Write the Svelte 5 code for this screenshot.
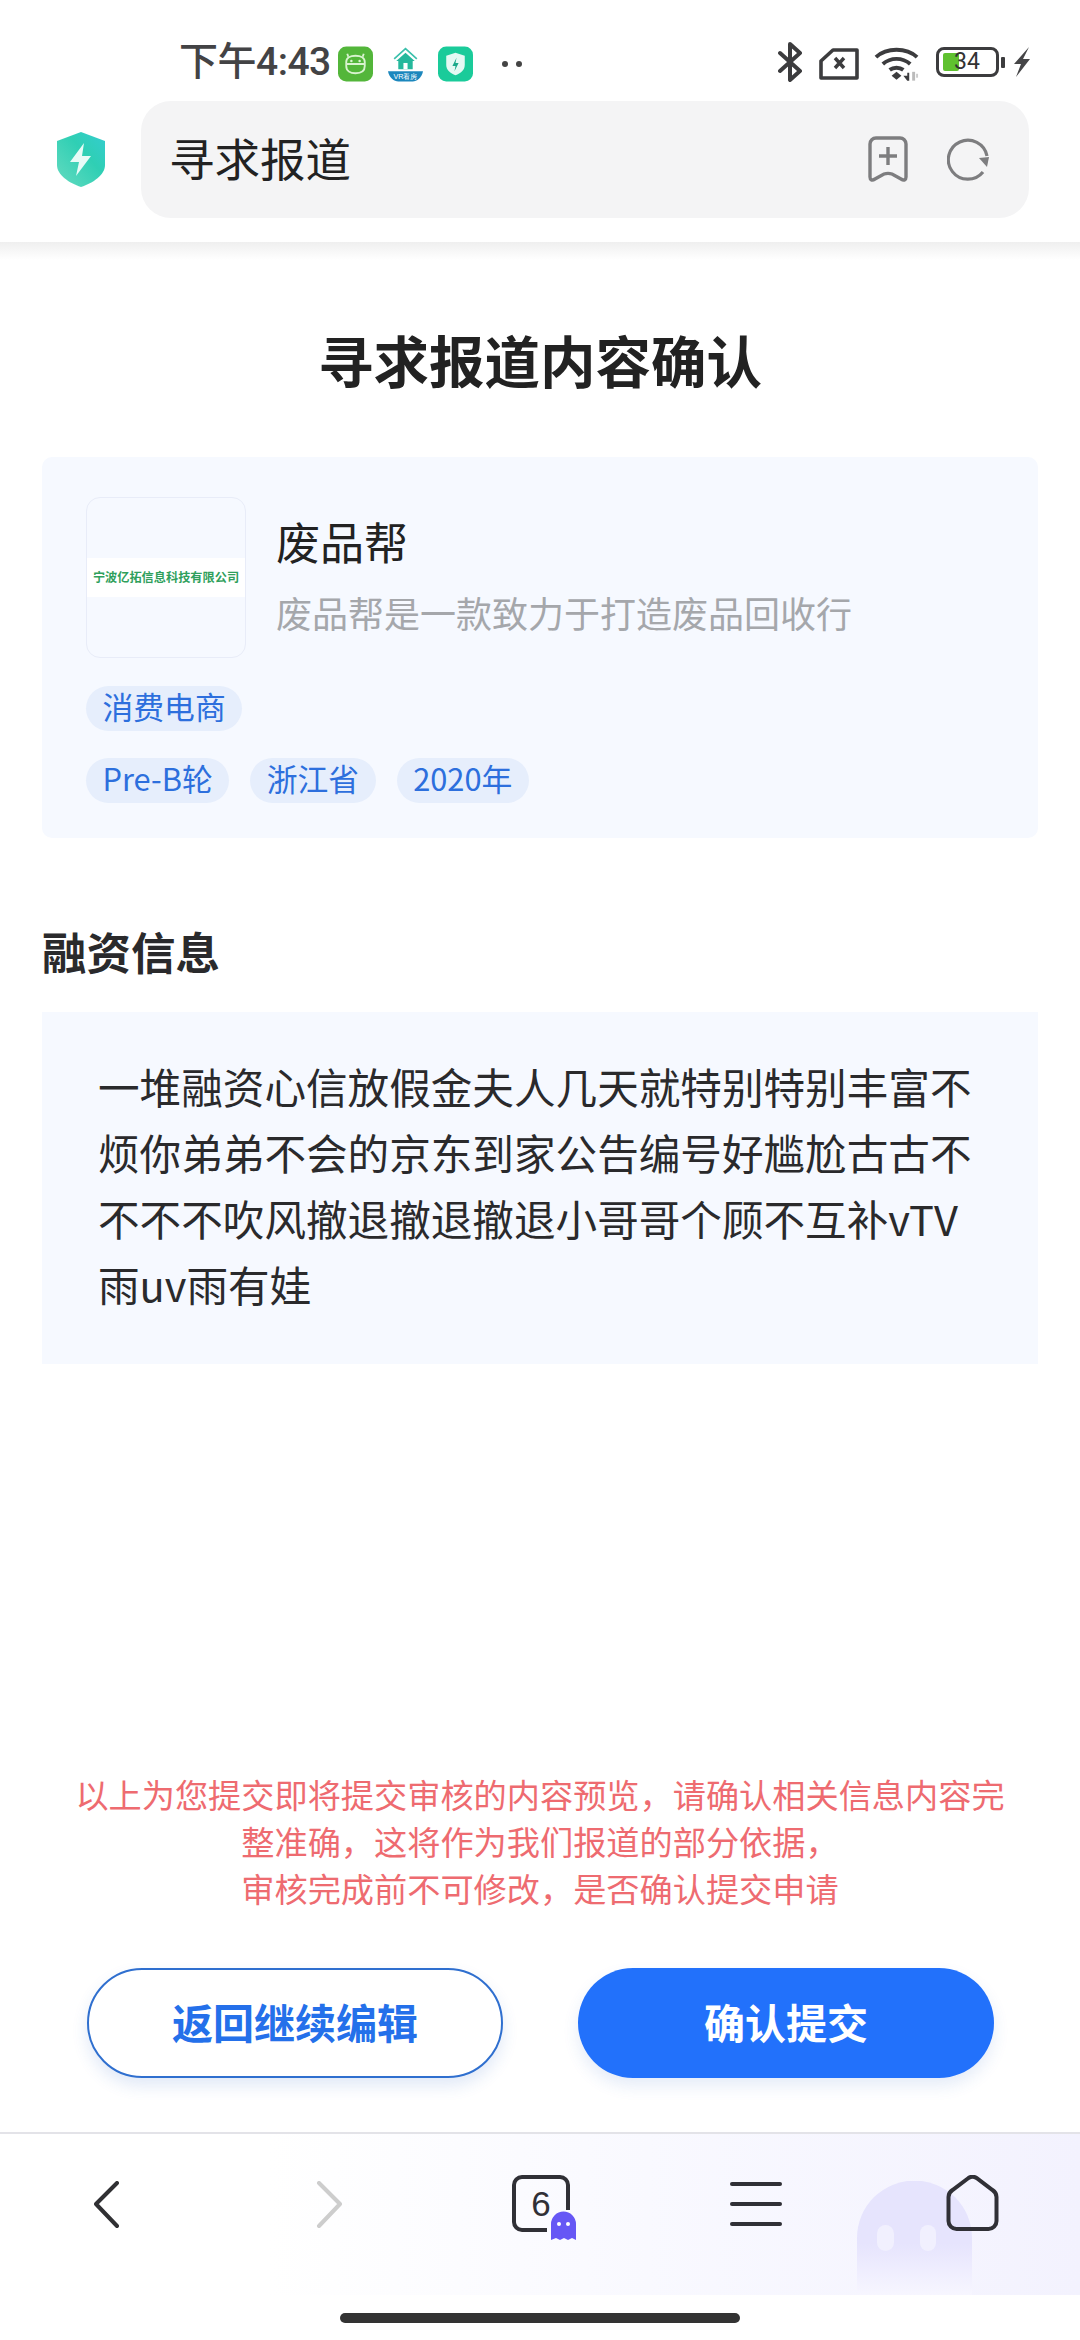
<script>
  const tags1 = ['消费电商'];
  const tags2 = ['Pre-B轮', '浙江省', '2020年'];
</script>

<div class="app">
  <header class="top">
    <div class="status">
      <div class="status-left">
        <span class="time">下午4:43</span>
        <svg class="si" width="35" height="36" viewBox="0 0 34 34">
          <rect width="34" height="34" rx="8" fill="#53b63a"/>
          <path d="M8 15c0-4 4-6 9-6s9 2 9 6v4c0 5-4 7-9 7s-9-2-9-7z" fill="none" stroke="#d9f3d0" stroke-width="1.8"/>
          <path d="M8 17h18M10 10l-1-3M24 10l1-3" stroke="#d9f3d0" stroke-width="1.8" fill="none"/>
          <circle cx="13" cy="14" r="1.2" fill="#d9f3d0"/><circle cx="21" cy="14" r="1.2" fill="#d9f3d0"/>
        </svg>
        <svg class="si house" width="35" height="36" viewBox="0 0 34 34">
          <path d="M6 12L17 2l11 10" fill="none" stroke="#3cc0ac" stroke-width="1.6"/>
          <path d="M17 6 L8 14 H10 V22 H24 V14 H26Z" fill="#25b89c"/>
          <rect x="15" y="16" width="4" height="6" fill="#fff"/>
          <path d="M0 24 H34 C33 30 28 34 24 34 H10 C6 34 1 30 0 24Z" fill="#1c87bd"/>
          <text x="17" y="32" font-size="7" text-anchor="middle" fill="#fff" font-family="Liberation Sans">VR看房</text>
        </svg>
        <svg class="si" width="35" height="36" viewBox="0 0 34 34">
          <rect width="34" height="34" rx="8" fill="#1acb9a"/>
          <path d="M17 6l9 3v9c0 5-4 8-9 10-5-2-9-5-9-10V9z" fill="#e4f9f3"/>
          <path d="M18 11l-4 8h3l-1 5 4-8h-3z" fill="#1aa98a"/>
        </svg>
        <span class="dots"><i></i><i></i></span>
      </div>
      <div class="status-right">
        <svg width="25" height="40" viewBox="0 0 25 40"><path d="M2 11l20 18-10 9V2l10 9L2 29" fill="none" stroke="#3c3c3e" stroke-width="4" stroke-linejoin="round" stroke-linecap="round"/></svg>
        <svg class="sim" width="40" height="32" viewBox="0 0 40 32"><path d="M14 2h24v28H2V13z" fill="none" stroke="#3c3c3e" stroke-width="3.6" stroke-linejoin="round"/><path d="M16 10l9 10M25 10l-9 10" stroke="#3c3c3e" stroke-width="3.4"/></svg>
        <svg class="wifi" width="46" height="36" viewBox="0 0 47 36">
          <path d="M2 11C13 1 33 1 44 11" fill="none" stroke="#3c3c3e" stroke-width="4"/>
          <path d="M9 18C17 11 29 11 37 18" fill="none" stroke="#3c3c3e" stroke-width="4"/>
          <path d="M16 24C20 21 26 21 30 24" fill="none" stroke="#3c3c3e" stroke-width="4"/>
          <path d="M23 26l5 4-5 4-5-4z" fill="#3c3c3e"/>
          <path d="M30 30h4v-3h2v8h-2z" fill="#3c3c3e"/><rect x="39" y="26" width="3" height="9" fill="#bbb"/><rect x="43" y="28" width="2" height="4" fill="#ccc"/>
        </svg>
        <span class="battery"><span class="fill"></span><span class="num">34</span></span>
        <span class="nub"></span>
        <svg class="bolt" width="19" height="30" viewBox="0 0 19 30"><path d="M17 0L2 17h7L4 30 18 12h-7z" fill="#454547"/></svg>
      </div>
    </div>
    <div class="addr-row">
      <svg class="shield" width="48" height="55" viewBox="0 0 48 55">
        <defs><linearGradient id="sg" x1="0" y1="1" x2="1" y2="0"><stop offset="0" stop-color="#66dbc0"/><stop offset="0.6" stop-color="#2fcfb4"/><stop offset="1" stop-color="#34cdd0"/></linearGradient></defs>
        <path d="M24 0l24 9v24c0 10-12 18-24 22C12 51 0 43 0 33V9z" fill="url(#sg)"/>
        <path d="M27 11L13 30h9l-3 14 15-20h-9z" fill="#e8fbf7"/>
      </svg>
      <div class="addr">
        <span class="url">寻求报道</span>
        <svg class="bm" width="40" height="46" viewBox="0 0 40 46"><path d="M8 2h24a6 6 0 0 1 6 6v33c0 3-2 4-5 2l-9-5c-3-1-5-1-8 0l-9 5c-3 2-5 1-5-2V8a6 6 0 0 1 6-6z" fill="none" stroke="#7d7d7f" stroke-width="3.4"/><path d="M20 11v18M11 20h18" stroke="#7d7d7f" stroke-width="3.4"/></svg>
        <svg class="rl" width="43" height="43" viewBox="0 0 43 43"><path d="M36 34A19.5 19.5 0 1 1 40 18" fill="none" stroke="#7d7d7f" stroke-width="3.2"/><path d="M32 20l10-1-2 10z" fill="#7d7d7f"/></svg>
      </div>
    </div>
  </header>
  <div class="top-fade"></div>

  <main>
    <h1>寻求报道内容确认</h1>
    <section class="card">
      <div class="co">
        <div class="logo"><div class="band">宁波亿拓信息科技有限公司</div></div>
        <div class="co-text">
          <div class="name">废品帮</div>
          <div class="desc">废品帮是一款致力于打造废品回收行</div>
        </div>
      </div>
      <div class="tags">{#each tags1 as t}<span class="tag">{t}</span>{/each}</div>
      <div class="tags t2">{#each tags2 as t}<span class="tag">{t}</span>{/each}</div>
    </section>
    <h2>融资信息</h2>
    <section class="body">一堆融资心信放假金夫人几天就特别特别丰富不烦你弟弟不会的京东到家公告编号好尴尬古古不不不不吹风撤退撤退撤退小哥哥个顾不互补vTV雨uv雨有娃</section>
  </main>

  <p class="notice">以上为您提交即将提交审核的内容预览，请确认相关信息内容完<br/>整准确，这将作为我们报道的部分依据，<br/>审核完成前不可修改，是否确认提交申请</p>
  <div class="btns">
    <button class="ghost-btn">返回继续编辑</button>
    <button class="primary">确认提交</button>
  </div>

  <nav>
    <svg class="bigghost" width="115" height="114" viewBox="0 0 115 114">
      <defs><linearGradient id="gg" x1="0" y1="0" x2="0" y2="1"><stop offset="0" stop-color="#e6e4fd"/><stop offset="0.55" stop-color="#e6e4fd"/><stop offset="1" stop-color="#f7f6ff"/></linearGradient></defs>
      <path d="M0 114V57a57 57 0 0 1 115 0v57z" fill="url(#gg)"/>
      <rect x="20" y="44" width="17" height="26" rx="8.5" fill="#f1f0fe"/><rect x="63" y="44" width="16" height="26" rx="8" fill="#f1f0fe"/>
    </svg>
    <svg class="ni" width="26" height="48" viewBox="0 0 26 48"><path d="M23 2L2 23l21 22" fill="none" stroke="#303033" stroke-width="4" stroke-linecap="round" stroke-linejoin="round"/></svg>
    <svg class="ni" width="26" height="48" viewBox="0 0 26 48"><path d="M3 2l21 21L3 45" fill="none" stroke="#cdcdcd" stroke-width="4" stroke-linecap="round" stroke-linejoin="round"/></svg>
    <div class="tabs">
      <svg width="66" height="66" viewBox="0 0 66 66">
        <path d="M35 55H10a8 8 0 0 1-8-8V10a8 8 0 0 1 8-8h38a8 8 0 0 1 8 8v25" fill="none" stroke="#303036" stroke-width="4"/>
        <path d="M39 65V49a12 12 0 0 1 25 0v16l-4-2-4 2-4-2-4 2-4-2z" fill="#6657f5"/>
        <circle cx="47" cy="49" r="2" fill="#fff"/><circle cx="56" cy="49" r="2" fill="#fff"/>
      </svg>
      <span class="count">6</span>
    </div>
    <div class="menu"><i></i><i></i><i></i></div>
    <svg class="home" width="53" height="56" viewBox="0 0 52 56"><path d="M22 3L6 15c-3 2-4 4-4 7v24a8 8 0 0 0 8 8h32a8 8 0 0 0 8-8V22c0-3-1-5-4-7L30 3c-3-2-5-2-8 0z" fill="none" stroke="#303036" stroke-width="4"/></svg>
  </nav>
  <div class="indicator-row"><span class="indicator"></span></div>
</div>

<style>
  :global(body) { margin: 0; background: #fff; }
  .app {
    width: 1080px; height: 2340px; display: flex; flex-direction: column; background: #fff; overflow: hidden;
    font-family: "Noto Sans CJK SC", "Noto Sans", sans-serif; color: #222;
  }
  .top { height: 242px; flex: none; display: flex; flex-direction: column; }
  .status { height: 101px; flex: none; display: flex; justify-content: space-between; padding: 42px 49px 0 179px; box-sizing: border-box; }
  .status-left { display: flex; align-items: flex-start; height: 40px; }
  .time { font-family: Roboto, "Noto Sans CJK SC", sans-serif; font-size: 39px; line-height: 40px; color: #434345; width: 159px; white-space: nowrap; font-weight: 500; letter-spacing: -0.5px; }
  .si { margin: 4px 15px 0 0; flex: none; }
  .dots { display: flex; gap: 8px; margin: 19px 0 0 14px; }
  .dots i { width: 6px; height: 6px; border-radius: 50%; background: #444; }
  .status-right { display: flex; align-items: flex-start; }
  .sim { margin: 6px 0 0 16px; }
  .wifi { margin: 4px 0 0 15px; }
  .battery { margin: 5px 0 0 16px; width: 63px; height: 30px; box-sizing: border-box; border: 3px solid #3c3c3e; border-radius: 8px; position: relative; display: block; }
  .fill { position: absolute; left: 4px; top: 3px; width: 16px; height: 18px; background: #5fc12f; border-radius: 2px; }
  .num { position: absolute; left: 15px; top: 0; font: 400 23px/24px Roboto, sans-serif; color: #333; }
  .nub { width: 4px; height: 11px; background: #3c3c3e; margin: 15px 0 0 2px; border-radius: 1px; }
  .bolt { margin: 5px 0 0 7px; }
  .addr-row { display: flex; align-items: center; padding-left: 57px; }
  .shield { flex: none; margin-right: 36px; }
  .addr { width: 888px; height: 117px; background: #f4f4f5; border-radius: 30px; display: flex; align-items: center; box-sizing: border-box; padding-left: 28px; }
  .url { font-size: 45.5px; line-height: 60px; color: #222; width: 699px; white-space: nowrap; margin-bottom: 5px; }
  .bm { margin-top: -2px; flex: none; }
  .rl { margin-left: 39px; margin-top: 0; flex: none; }
  .top-fade { height: 18px; flex: none; background: linear-gradient(#efefef, #fff); }

  main { flex: 1; padding: 0 42px; min-height: 0; }
  h1 { margin: 69px 0 68px; font-size: 55.5px; line-height: 60px; font-weight: 700; text-align: center; color: #222; }
  .card { background: #f6f9ff; border-radius: 10px; height: 381px; box-sizing: border-box; padding: 40px 44px 0; }
  .co { display: flex; margin-bottom: 28px; }
  .logo { width: 160px; height: 161px; box-sizing: border-box; border: 1.5px solid #e8ecf8; border-radius: 14px; display: flex; align-items: center; flex: none; overflow: hidden; }
  .band { width: 100%; height: 39px; background: #fff; color: #2f9f5c; font-size: 12.2px; line-height: 39px; font-weight: 700; text-align: center; white-space: nowrap; }
  .co-text { margin-left: 30px; padding-top: 14px; }
  .name { font-size: 44px; line-height: 60px; color: #222; }
  .desc { font-size: 36px; line-height: 50px; color: #a5a7ab; margin-top: 16px; white-space: nowrap; }
  .tags { display: flex; gap: 21px; }
  .t2 { margin-top: 27px; }
  .tag { height: 45px; line-height: 39px; padding: 0 16.5px; border-radius: 23px; background: #e6eefc; color: #2d6fdd; font-size: 30.8px; white-space: nowrap; }
  h2 { margin: 83px 0 31px; font-size: 44.5px; line-height: 60px; font-weight: 700; color: #2a2a2c; }
  .body { background: #f6f9ff; height: 352px; box-sizing: border-box; padding: 41px 56px; font-size: 41.6px; line-height: 66px; color: #2a2a2c; }

  .notice { margin: 0 0 57px; text-align: center; font-size: 33.2px; line-height: 47px; color: #ee6b70; flex: none; }
  .btns { display: flex; justify-content: space-between; padding: 0 86px 0 87px; margin-bottom: 54px; flex: none; }
  .btns button { width: 416px; height: 110px; border-radius: 56px; font: 700 41px/1 "Noto Sans CJK SC", sans-serif; box-sizing: border-box; padding: 0 0 4px; }
  .ghost-btn { background: #fff; border: 2px solid #2f6fcf; color: #2470ea; box-shadow: 0 8px 16px rgba(40, 100, 200, 0.14); }
  .primary { background: #2271fb; border: 0; color: #fff; box-shadow: 0 8px 16px rgba(40, 100, 200, 0.12); }

  nav { height: 163px; flex: none; box-sizing: border-box; border-top: 2px solid #e3e3e8; position: relative; display: grid; grid-template-columns: 222px 196px 218px 216px 53px; align-items: start; padding: 41px 0 0 94px;
    background: linear-gradient(90deg, #fff 25%, #f9f9ff 60%, #f3f2fe 100%); }
  .ni { display: block; margin-top: 6px; position: relative; }
  .tabs { position: relative; width: 66px; height: 66px; }
  .tabs svg { display: block; }
  .count { position: absolute; left: 0; top: 0; width: 58px; height: 58px; text-align: center; font: 400 35px/58px "Liberation Sans", sans-serif; color: #303036; }
  .menu { display: flex; flex-direction: column; gap: 16px; width: 52px; margin-top: 7px; position: relative; }
  .menu i { height: 4px; background: #303036; border-radius: 2px; }
  .home { display: block; margin-top: 0; position: relative; }
  .bigghost { position: absolute; left: 857px; bottom: 0; }
  .indicator-row { flex: none; height: 45px; box-sizing: border-box; display: flex; justify-content: center; padding-top: 18px; }
  .indicator { width: 400px; height: 10px; background: #333; border-radius: 5px; }
</style>
